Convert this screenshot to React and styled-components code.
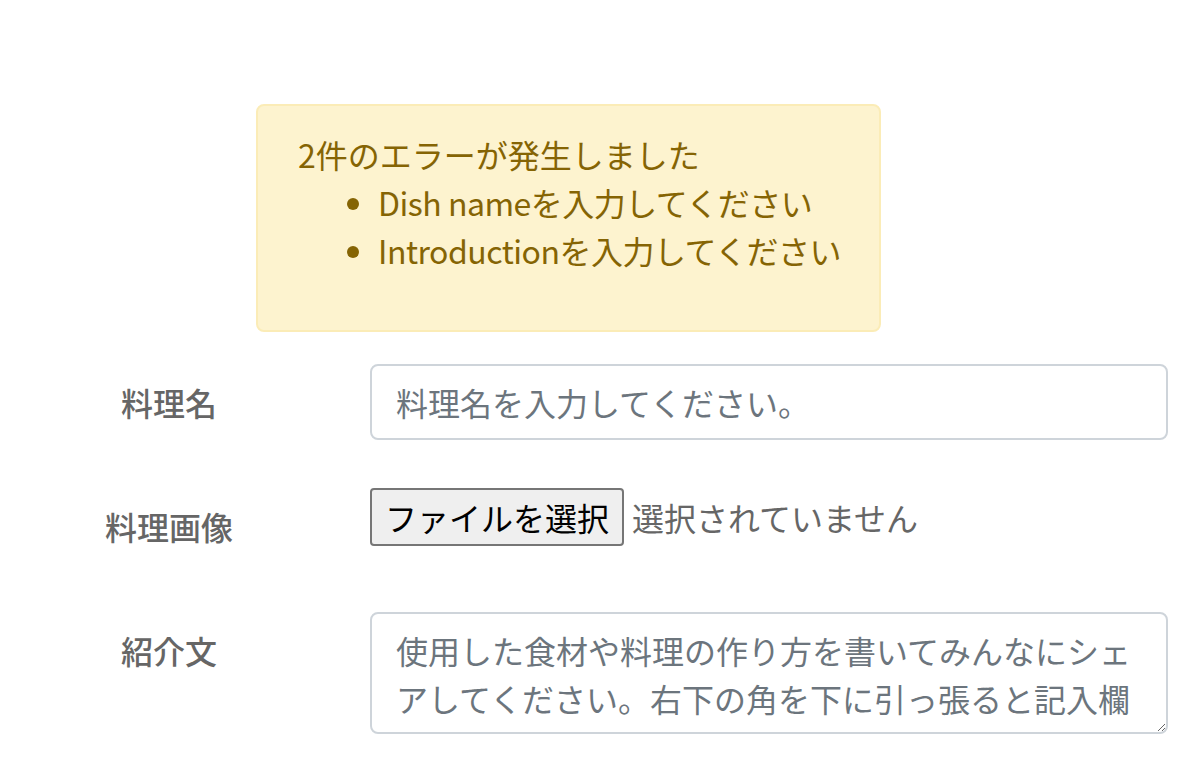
import React from 'react';
import styled, { createGlobalStyle } from 'styled-components';

const GlobalStyle = createGlobalStyle`
  html, body {
    margin: 0;
    padding: 0;
    background: #ffffff;
  }
  body {
    font-family: "Noto Sans CJK JP", "Noto Sans", sans-serif;
    color: #212529;
    overflow: hidden;
  }
`;

const Page = styled.div`
  width: 1202px;
  height: 784px;
  padding-top: 104px;
  box-sizing: border-box;
  overflow: hidden;
`;

const Alert = styled.div`
  margin: 0 0 32px 256px;
  width: 625px;
  box-sizing: border-box;
  padding: 24px 40px;
  background: #fdf3cf;
  border: 2px solid #fbecb7;
  border-radius: 8px;
  color: #856404;
  font-size: 32px;
  line-height: 48px;
`;

const AlertTitle = styled.div`
  margin: 0;
`;

const ErrorList = styled.ul`
  margin: 0 0 32px;
  padding-left: 80px;
`;

const ErrorItem = styled.li`
  white-space: nowrap;
  letter-spacing: -0.5px;
`;

const FormRow = styled.div`
  display: flex;
  align-items: flex-start;
  margin-bottom: 48px;
`;

const Label = styled.label`
  width: 338px;
  flex-shrink: 0;
  padding: 14px 0;
  text-align: center;
  font-size: 32px;
  line-height: 48px;
  font-weight: 500;
  color: #666666;
`;

const Field = styled.div`
  margin-left: 32px;
  width: 798px;
  display: flex;
  align-items: center;
`;

const TextInput = styled.input`
  width: 100%;
  height: 76px;
  box-sizing: border-box;
  padding: 12px 24px;
  border: 2px solid #ced4da;
  border-radius: 8px;
  font-family: inherit;
  font-size: 32px;
  line-height: 48px;
  color: #495057;
  outline: none;

  &::placeholder {
    color: #6c757d;
  }
`;

const FileButton = styled.button`
  height: 58px;
  box-sizing: border-box;
  padding: 0 13px;
  background: #efefef;
  border: 2px solid #767676;
  border-radius: 4px;
  font-family: inherit;
  font-size: 32px;
  line-height: 1;
  color: #000000;
`;

const FileStatus = styled.span`
  margin-left: 8px;
  font-size: 32px;
  color: #666666;
`;

const TextArea = styled.textarea`
  width: 100%;
  height: 122px;
  box-sizing: border-box;
  padding: 12px 24px 0;
  border: 2px solid #ced4da;
  border-radius: 8px;
  font-family: inherit;
  font-size: 32px;
  line-height: 48px;
  color: #495057;
  outline: none;
  resize: vertical;
  overflow: hidden;

  &::placeholder {
    color: #6c757d;
  }
`;

const errors = ['Dish nameを入力してください', 'Introductionを入力してください'];

export default function App() {
  return (
    <>
      <GlobalStyle />
      <Page>
        <Alert>
          <AlertTitle>{errors.length}件のエラーが発生しました</AlertTitle>
          <ErrorList>
            {errors.map((msg) => (
              <ErrorItem key={msg}>{msg}</ErrorItem>
            ))}
          </ErrorList>
        </Alert>

        <FormRow>
          <Label>料理名</Label>
          <Field>
            <TextInput placeholder="料理名を入力してください。" />
          </Field>
        </FormRow>

        <FormRow>
          <Label>料理画像</Label>
          <Field>
            <FileButton type="button">ファイルを選択</FileButton>
            <FileStatus>選択されていません</FileStatus>
          </Field>
        </FormRow>

        <FormRow>
          <Label>紹介文</Label>
          <Field>
            <TextArea placeholder="使用した食材や料理の作り方を書いてみんなにシェアしてください。右下の角を下に引っ張ると記入欄が大きくなります。" />
          </Field>
        </FormRow>
      </Page>
    </>
  );
}
